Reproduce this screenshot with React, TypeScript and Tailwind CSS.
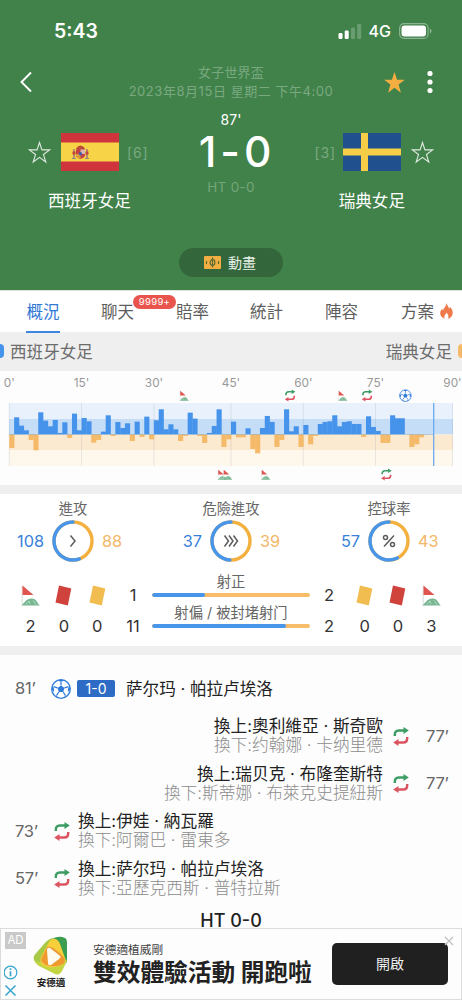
import type { ReactNode } from "react";

// momentum per minute: > 0 is the home team, < 0 is the away team
const momentum = [
  -41, 51, 26, 12, -17, -48, 66, 41, 24, 43, 4, 36, -11, 62, 12, 49, 39, -25, -17, 8, 57, -5, 37,
  19, 33, -20, 38, -8, 53, -15, 42, 75, 15, 30, 15, -20, -5, 65, 47, -5, -26, 4, 25, 75, -38, -15,
  38, -9, -9, 18, -44, -57, 19, 55, 37, -38, -17, 75, 9, 24, -38, 28, -30, -5, 31, 37, 39, 57, 24,
  37, 39, 31, 31, -8, 54, 22, 10, -26, -26, 57, 48, 48, 0, -38, -30, -9,
];

function CornerFlag() {
  return (
    <>
      <path d="M2.2 1v18" stroke="#d9dcda" strokeWidth="1" />
      <path d="M2.500 .5v9.500h11z" fill="#e0554f" />
      <path d="M1 20.500C5 18 6 13.500 11.500 13.500S17 18.500 20 20.500z" fill="#79b792" />
      <path d="M6 19.500l3-3.500 1 3M13 15.500l3 4" stroke="#c0dfca" strokeWidth="0.800" fill="none" />
    </>
  );
}

function SubArrows() {
  return (
    <>
      <path d="M2 9.500V8.500Q2 3.700 6.500 3.700H12.500" fill="none" stroke="#3d9c63" strokeWidth="2.700" />
      <path d="M11.800 0l6 3.700-6 3.700z" fill="#3d9c63" />
      <path d="M16 10.500V11.500Q16 16.300 11.500 16.300H5.500" fill="none" stroke="#db5560" strokeWidth="2.700" />
      <path d="M6.200 12.600L.200 16.300l6 3.700z" fill="#db5560" />
    </>
  );
}

function Ball() {
  return (
    <>
      <circle cx="10" cy="10" r="9.300" fill="#fff" stroke="#2f7bdc" strokeWidth="1.300" />
      <path
        d="M10 6.400l3.500 2.500-1.300 4.100H7.800L6.500 8.900zM6.500 1.400Q10 3.400 13.500 1.400L10 .4zM18.900 7q-2.900 2.400-1.800 6l2.200-3zM1.100 7q2.900 2.400 1.800 6l-2.200-3zM16 17.200q-3.600-.2-4.700 2.300zM4 17.200q3.600-.2 4.700 2.300z"
        fill="#2f7bdc"
      />
      <path
        d="M10 6.400V2.500M13.500 8.900l4-1.300M12.200 13l2.300 3.600M7.800 13l-2.300 3.600M6.500 8.900l-4-1.300"
        stroke="#2f7bdc"
        strokeWidth="1.200"
      />
    </>
  );
}

function SubIcon() {
  return (
    <svg className="h-[19px] w-[16px] shrink-0" viewBox="0 0 18 20" preserveAspectRatio="none">
      <SubArrows />
    </svg>
  );
}

function CornerIcon() {
  return (
    <svg className="h-[21px] w-[21px]" viewBox="0 0 21 21">
      <CornerFlag />
    </svg>
  );
}

function Card({ red }: { red?: boolean }) {
  return (
    <svg className="h-[21px] w-[17px]" viewBox="0 0 17 21">
      <path d="M4 .5L16.300 3.500 12.800 20.600.500 17.600z" fill={red ? "#d0423c" : "#f2bd50"} />
    </svg>
  );
}

function OutlineStar() {
  return (
    <svg className="h-[23px] w-[23px]" viewBox="0 0 23 23">
      <path
        d="M11.500 1.500l2.450 7.400h7.700l-6.200 4.600 2.350 7.500-6.300-4.600-6.300 4.600 2.350-7.500-6.200-4.600h7.700z"
        fill="none"
        stroke="#dfe9e0"
        strokeWidth="1.100"
      />
    </svg>
  );
}

function SpainFlag() {
  return (
    <svg className="h-[38px] w-[58px]" viewBox="0 0 58 38">
      <rect width="58" height="38" fill="#cf343c" />
      <rect y="9.500" width="58" height="19" fill="#f7d347" />
      <rect x="12" y="16" width="2" height="10" fill="#b98a6c" />
      <rect x="25" y="16" width="2" height="10" fill="#b98a6c" />
      <path d="M11.500 18.500h3v3h-3zM24.500 18.500h3v3h-3z" fill="#c2463a" />
      <path d="M15 15.500q4.500-6 9 0l-1 1.500h-7z" fill="#bd4a33" />
      <path d="M15 16.500h9v6.500q-4.500 6-9 0z" fill="#c73f42" />
      <path d="M19.500 16.500h4.500v4.500h-4.500z" fill="#d9b9b4" />
      <path d="M15 21h4.500v5q-3-.5-4.500-3z" fill="#d89c3d" />
      <circle cx="19.500" cy="20.800" r="1.700" fill="#3f5ea8" />
      <path d="M11 25.500h4M24 25.500h4" stroke="#8a8a86" strokeWidth="1.200" />
    </svg>
  );
}

function SwedenFlag() {
  return (
    <svg className="h-[38px] w-[58px]" viewBox="0 0 58 38">
      <rect width="58" height="38" fill="#21508f" />
      <path d="M18 0h7v38h-7zM0 15.500h58v7H0z" fill="#f6cd46" />
    </svg>
  );
}

function Header() {
  return (
    <header className="h-[290px] bg-[#41824a] text-white">
      <div className="flex h-[62px] items-center pr-[30px] pl-[54px]">
        <span className="pt-px text-[19.500px] font-semibold">5:43</span>
        <svg className="mr-[7px] ml-auto h-[15px] w-[24px]" viewBox="0 0 24 15">
          <rect x="0.500" y="9" width="4" height="6" rx="1.200" fill="#fff" />
          <rect x="6.700" y="6.500" width="4" height="8.500" rx="1.200" fill="#fff" />
          <rect x="13" y="3.500" width="4" height="11.500" rx="1.200" fill="#6a9d71" />
          <rect x="19.200" y="0" width="4" height="15" rx="1.200" fill="#6a9d71" />
        </svg>
        <span className="mr-[8px] text-[16px] font-medium">4G</span>
        <svg className="h-[16px] w-[33px]" viewBox="0 0 33 16">
          <rect x="0.600" y="0.600" width="28.500" height="14.800" rx="4.500" fill="none" stroke="#8db592" strokeWidth="1.100" />
          <rect x="2.500" y="2.500" width="24.500" height="11" rx="3" fill="#fff" />
          <path d="M30.800 5.500q1.800.8 1.800 2.500t-1.800 2.500z" fill="#8db592" />
        </svg>
      </div>

      <div className="flex h-[40px] items-center pr-[29px] pl-[19px]">
        <svg className="h-[22px] w-[14px]" viewBox="0 0 14 22">
          <path d="M12 1.500L2.500 11 12 20.500" fill="none" stroke="#fff" strokeWidth="1.900" />
        </svg>
        <div className="ml-[66px] w-[264px] text-center text-[13px] leading-[19px] tracking-[0.200px] whitespace-nowrap text-[#7aa981]">
          <p>女子世界盃</p>
          <p className="tracking-[0.550px]">2023年8月15日 星期二 下午4:00</p>
        </div>
        <svg className="ml-auto h-[21px] w-[21px]" viewBox="0 0 21 21">
          <path d="M10.500 0l2.600 7.700h7.700l-6.200 4.800 2.300 8.200-6.400-4.900-6.400 4.900 2.300-8.200L.200 7.700h7.700z" fill="#f2ae41" />
        </svg>
        <svg className="ml-[22px] h-[22px] w-[6px]" viewBox="0 0 6 22">
          <circle cx="3" cy="2.500" r="2.600" fill="#fff" />
          <circle cx="3" cy="11" r="2.600" fill="#fff" />
          <circle cx="3" cy="19.500" r="2.600" fill="#fff" />
        </svg>
      </div>

      <div className="flex h-[114px] justify-between px-[28px]">
        <div className="w-[124px] pt-[31px]">
          <div className="flex items-center">
            <OutlineStar />
            <span className="ml-[10px]">
              <SpainFlag />
            </span>
            <span className="ml-[8px] text-[14px] tracking-[0.900px] text-[#7aa981]">[6]</span>
          </div>
          <p className="mt-[18px] ml-[20px] text-[16.600px] leading-6 whitespace-nowrap">西班牙女足</p>
        </div>
        <div className="w-[100px] pt-[10px] text-center">
          <p className="text-[14px] leading-4">87'</p>
          <p className="mt-[-1px] mb-[2px] flex justify-center gap-[4px] pl-[8px] text-[42.500px] leading-[50px] font-medium whitespace-nowrap">
            <span>1</span>
            <span>-</span>
            <span>0</span>
          </p>
          <p className="text-[13.500px] leading-4 tracking-[0.300px] text-[#74a57b]">HT 0-0</p>
        </div>
        <div className="flex w-[124px] flex-col items-end pt-[31px]">
          <div className="flex items-center">
            <span className="mr-[7px] text-[14px] tracking-[0.900px] text-[#7aa981]">[3]</span>
            <SwedenFlag />
            <span className="ml-[10px]">
              <OutlineStar />
            </span>
          </div>
          <p className="mt-[18px] mr-[29px] text-[16.600px] leading-6 whitespace-nowrap">瑞典女足</p>
        </div>
      </div>

      <button className="mx-auto mt-[32px] flex h-[29px] w-[104px] items-center rounded-full bg-[#33663a] pl-[25px] text-[14px] text-[#e9f1ea]">
        <svg className="mr-[7px] h-[13px] w-[17px]" viewBox="0 0 17 13">
          <rect width="17" height="13" rx="1" fill="#f2ae41" />
          <g stroke="#5b6b36" strokeWidth="1.200" fill="none">
            <ellipse cx="8.500" cy="6.500" rx="2.400" ry="2.800" />
            <path d="M8.500 1.500v10M2.500 4.900v3.200M14.500 4.900v3.200" />
          </g>
        </svg>
        動畫
      </button>
    </header>
  );
}

function Tabs() {
  return (
    <nav className="flex h-[42px] border-t border-[#dfe5df] bg-white pl-[26px] text-[16.500px] leading-[43px] text-[#5e5e5e]">
      <span className="h-[42px] w-[34px] border-b-2 border-[#3c86e0] text-center text-[#3279d6]">概況</span>
      <span className="relative ml-[41px] w-[75px]">
        聊天
        <span className="absolute top-[4px] left-[32px] h-[14px] w-[43px] rounded-full bg-[#e9554d] text-center text-[9.500px] leading-[14px] tracking-[0.300px] text-white">
          9999+
        </span>
      </span>
      <span className="w-[74px]">賠率</span>
      <span className="w-[75px]">統計</span>
      <span className="w-[76px]">陣容</span>
      <span className="flex h-[43px] items-center">
        方案
        <svg className="mb-[4px] ml-[6px] h-[16px] w-[13px]" viewBox="0 0 13 16">
          <path
            d="M6.300 0c.8 2.500 2.500 3.400 2.700 5.700.7-.5.900-1.200 1-2C12 6 13 8 12.700 10.500c-.4 3-2.700 5-5 5.300 1.400-1.800.8-4-1.200-6.300C6 11.500 4.200 12 4.300 14c0 .7.200 1.200.5 1.700C1.800 14.800 0 12.500.200 9.700.400 8 1.300 6.800 2.200 5.500c.2 1 .4 1.500 1 2C3.600 4.500 6.500 3.500 6.300 0z"
            fill="#ee7a4c"
          />
        </svg>
      </span>
    </nav>
  );
}

function Momentum() {
  const left = 9.3;
  const step = 4.82;
  const base = 63.3;
  const ticks = [
    [9.3, "0'"],
    [81.5, "15'"],
    [154, "30'"],
    [231, "45'"],
    [303.3, "60'"],
    [375.5, "75'"],
    [452.5, "90'"],
  ] as const;

  const mark = (x: number, y: number, icon: ReactNode, scale: number) => (
    <g transform={`translate(${x} ${y}) scale(${scale})`}>{icon}</g>
  );

  return (
    <section className="h-[114px] bg-[#fdfdfd]">
      <svg className="block h-[114px] w-full" viewBox="0 0 462 114">
        <rect x="9" y="32" width="444" height="16" fill="#e9f2fc" />
        <rect x="9" y="48" width="444" height="15.500" fill="#c5ddf7" />
        <rect x="9" y="63.500" width="444" height="15.500" fill="#fbe9d0" />
        <rect x="9" y="79" width="444" height="16" fill="#fef7ec" />
        {ticks.map(([x, label]) => (
          <g key={label}>
            <text x={x} y="15.500" textAnchor="middle" fontSize="11.800" fill="#999">
              {label}
            </text>
            <path d={`M${x} 32v63`} stroke="#718298" strokeOpacity="0.150" />
          </g>
        ))}
        {momentum.map((value, i) => (
          <rect
            key={i}
            x={left + i * step}
            y={value > 0 ? base - value / 3 : base}
            width={step + 0.3}
            height={Math.abs(value) / 3}
            fill={value > 0 ? "#4593ea" : "#f5ba69"}
          />
        ))}
        <path d="M9 63.500h425" stroke="#8fb0cc" strokeWidth="0.600" />
        <path d="M433.700 32v63" stroke="#6aaaf0" strokeWidth="1.300" />

        {mark(179, 19.5, <CornerFlag />, 0.5)}
        {mark(284.7, 18.5, <SubArrows />, 0.6)}
        {mark(337.5, 19.5, <CornerFlag />, 0.5)}
        {mark(361.7, 18.5, <SubArrows />, 0.6)}
        {mark(399.2, 18.5, <Ball />, 0.62)}
        {mark(217, 98.5, <CornerFlag />, 0.5)}
        {mark(222.5, 98.5, <CornerFlag />, 0.5)}
        {mark(260.5, 98.5, <CornerFlag />, 0.5)}
        {mark(381, 97.5, <SubArrows />, 0.6)}
      </svg>
    </section>
  );
}

type RingProps = { label: string; home: number; away: number; children: ReactNode };

function Ring({ label, home, away, children }: RingProps) {
  const around = 2 * Math.PI * 19;
  const homePart = (home / (home + away)) * around;
  return (
    <div className="flex flex-col items-center">
      <p className="h-[20px] text-[14.300px] leading-[22px] whitespace-nowrap text-[#666]">{label}</p>
      <div className="mt-[2px] flex items-center text-[16.300px]">
        <span className="w-[36px] pr-[8px] text-right text-[#3a7fd9]">{home}</span>
        <svg className="h-[42px] w-[42px]" viewBox="0 0 42 42" fill="none">
          <circle cx="21" cy="21" r="19" stroke="#f3b03f" strokeWidth="3.400" />
          <circle
            cx="21"
            cy="21"
            r="19"
            stroke="#4796ec"
            strokeWidth="3.400"
            strokeLinecap="round"
            strokeDasharray={`${homePart} ${around}`}
            transform="translate(42 0) scale(-1 1) rotate(-90 21 21)"
          />
          <g stroke="#5c5c5c" strokeWidth="1.500">{children}</g>
        </svg>
        <span className="w-[36px] pl-[8px] text-[#f3b768]">{away}</span>
      </div>
    </div>
  );
}

function ShotBar({ label, share }: { label: string; share: number }) {
  return (
    <div className="h-[31px]">
      <p className="h-[21px] text-center text-[14.300px] leading-[19px] whitespace-nowrap text-[#666]">{label}</p>
      <div className="flex h-[4px] overflow-hidden rounded-full bg-[#f7bd6a]">
        <div className="rounded-full bg-[#4796ec]" style={{ width: `${share * 100}%` }} />
      </div>
    </div>
  );
}

function Count({ icon, value }: { icon: ReactNode; value: number }) {
  return (
    <div className="flex w-[33.300px] flex-col items-center">
      <div className="flex h-[21px] items-center">{icon}</div>
      <span className="mt-[10px] leading-5">{value}</span>
    </div>
  );
}

function Stats() {
  return (
    <section className="h-[152px] bg-white pt-[4px]">
      <div className="flex h-[67px] justify-between px-[16px]">
        <Ring label="進攻" home={108} away={88}>
          <path d="M18.500 15.500l4.500 5.500-4.500 5.500" />
        </Ring>
        <Ring label="危險進攻" home={37} away={39}>
          <path d="M14.500 15.500l4 5.500-4 5.500M19 15.500l4 5.500-4 5.500M23.500 15.500l4 5.500-4 5.500" />
        </Ring>
        <Ring label="控球率" home={57} away={43}>
          <circle cx="17.500" cy="17.500" r="2" />
          <circle cx="24.500" cy="24.500" r="2" />
          <path d="M26 15.500L16 26.500" />
        </Ring>
      </div>
      <div className="flex pt-[6px] text-[16.500px] text-[#333]">
        <div className="ml-[14px] flex w-[100px] pt-[14px]">
          <Count icon={<CornerIcon />} value={2} />
          <Count icon={<Card red />} value={0} />
          <Count icon={<Card />} value={0} />
        </div>
        <div className="w-[38px] pt-[14px] text-center leading-5">
          <p>1</p>
          <p className="mt-[11px]">11</p>
        </div>
        <div className="w-[158px] pt-px">
          <ShotBar label="射正" share={1 / 3} />
          <ShotBar label="射偏 / 被封堵射门" share={11 / 13} />
        </div>
        <div className="w-[38px] pt-[14px] text-center leading-5">
          <p>2</p>
          <p className="mt-[11px]">2</p>
        </div>
        <div className="flex w-[100px] pt-[14px]">
          <Count icon={<Card />} value={0} />
          <Count icon={<Card red />} value={0} />
          <Count icon={<CornerIcon />} value={3} />
        </div>
      </div>
    </section>
  );
}

type SubProps = { minute: string; on: string; off: string; away?: boolean };

function Substitution({ minute, on, off, away }: SubProps) {
  return (
    <div
      className={
        away
          ? "flex h-[47.500px] flex-row-reverse items-center pl-[14px] text-right"
          : "flex h-[47.500px] items-center pl-[15px]"
      }
    >
      <span
        className={
          away ? "w-[53px] pl-[17px] text-left tracking-[-0.200px] text-[#666]" : "w-[39px] tracking-[-0.200px] text-[#666]"
        }
      >
        {minute}
      </span>
      <SubIcon />
      <div className={away ? "mr-[10px] text-[16.700px] leading-[19px]" : "ml-[8px] text-[16.700px] leading-[19px]"}>
        <p className="text-[#222]">換上:{on}</p>
        <p className="font-light text-[#8c8c8c]">換下:{off}</p>
      </div>
    </div>
  );
}

function Events() {
  return (
    <section className="h-[273px] bg-[#fdfdfd] pt-[10px] text-[16.500px] whitespace-nowrap">
      <div className="flex h-[47px] items-center pl-[15px]">
        <span className="w-[36px] tracking-[-0.200px] text-[#666]">81’</span>
        <svg className="h-[20px] w-[20px]" viewBox="0 0 20 20">
          <Ball />
        </svg>
        <span className="ml-[6px] h-[17px] w-[38px] rounded-[2px] bg-[#2d6bc5] text-center text-[14px] leading-[17px] text-white">
          1-0
        </span>
        <span className="ml-[11px] pt-px text-[16.600px] text-[#222]">萨尔玛 · 帕拉卢埃洛</span>
      </div>
      <div className="pt-[0.500px]">
        <Substitution away minute="77’" on="奧利維亞 · 斯奇歐" off="约翰娜 · 卡纳里德" />
        <Substitution away minute="77’" on="瑞贝克 · 布隆奎斯特" off="斯蒂娜 · 布萊克史提紐斯" />
        <Substitution minute="73’" on="伊娃 · 納瓦羅" off="阿爾巴 · 雷東多" />
        <Substitution minute="57’" on="萨尔玛 · 帕拉卢埃洛" off="亞歷克西斯 · 普特拉斯" />
      </div>
      <p className="mt-[9.500px] text-center text-[18px] leading-[18px] font-medium text-[#222]">HT 0-0</p>
    </section>
  );
}

function AdBanner() {
  return (
    <aside className="relative flex h-[72px] border border-[#dcdcdc] bg-[#fdfdfd]">
      <div className="w-[31px] pt-[3px] pl-[4px]">
        <p className="h-[17px] w-[21px] bg-[#c9c9c9] text-center text-[11.500px] leading-[17px] text-white">AD</p>
        <svg className="mt-[15px] ml-[-1px] h-[34px] w-[14px]" viewBox="0 0 14 34" fill="none" stroke="#36a5cf">
          <circle cx="6.500" cy="8.500" r="6.300" strokeWidth="1.200" />
          <path d="M6.500 7.300v5M6.500 4.200v1.700" strokeWidth="1.700" />
          <path d="M1.500 21.500l10 10M11.500 21.500l-10 10" strokeWidth="1.500" />
        </svg>
      </div>
      <div className="flex w-[38px] flex-col items-center pt-[7px]">
        <svg className="h-[39px] w-[36px]" viewBox="0 0 36 39">
          <path d="M19 3Q26-1 32 2q2 1 2 5v19l-9 6z" fill="#3c9c50" />
          <path d="M20 2Q15 3 11 8L1.500 19Q-.5 22 2 26l7 2L24 4z" fill="#a8c848" />
          <path d="M2 25q0 3 6 6l14 7q4 2 7-3l5-10-3-4-10 9z" fill="#c3d541" />
          <path d="M21 3q4 0 6 5l5 14q1 6-5 8-12 3-17-1-4-3-2-8L15 8q2-5 6-5z" fill="#f6cf3b" />
          <path d="M14 11q4-1 9 3 7 5 9 10 0 5-8 6-10 1-14-3-3-2-1-6z" fill="#ee9a31" />
          <path d="M14 14q0-3 3-2l9 7q3 2 0 4l-8 6q-3 1-3-2z" fill="#fdfaf0" />
        </svg>
        <span className="mt-[2px] text-[9.500px] leading-[11px] font-bold whitespace-nowrap text-[#222]">安德適</span>
      </div>
      <div className="ml-[23px] w-[239px] whitespace-nowrap text-[#222]">
        <p className="mt-[12px] text-[11.700px] leading-[18px] text-[#444]">安德適植威剛</p>
        <p className="text-[23.700px] leading-7 font-bold">雙效體驗活動 開跑啦</p>
      </div>
      <button className="mt-[14px] h-[42px] w-[116px] shrink-0 rounded-[5px] bg-[#202020] pb-[2px] text-[14px] text-[#eee]">
        開啟
      </button>
      <svg className="mt-[7px] ml-[-4px] h-[10px] w-[10px] shrink-0" viewBox="0 0 10 10">
        <path d="M1 1l8 8M9 1L1 9" stroke="#bdbdbd" strokeWidth="1.100" />
      </svg>
    </aside>
  );
}

export default function App() {
  return (
    <div className="h-[1000px] w-[462px] overflow-hidden bg-[#efefef] font-[Inter,'Noto_Sans_CJK_TC',sans-serif]">
      <Header />
      <Tabs />
      <div className="flex h-[39px] items-center justify-between text-[16.600px] text-[#6c6c6c]">
        <div className="flex items-center">
          <span className="mr-[6px] h-[14px] w-[4px] rounded-r-[4px] bg-[#4593ea]" />
          <span className="pt-[2px]">西班牙女足</span>
        </div>
        <div className="flex items-center">
          <span className="pt-[2px]">瑞典女足</span>
          <span className="ml-[6px] h-[14px] w-[4px] rounded-l-[4px] bg-[#f5ba69]" />
        </div>
      </div>
      <Momentum />
      <div className="h-[9px]" />
      <Stats />
      <div className="h-[9px]" />
      <Events />
      <AdBanner />
    </div>
  );
}
